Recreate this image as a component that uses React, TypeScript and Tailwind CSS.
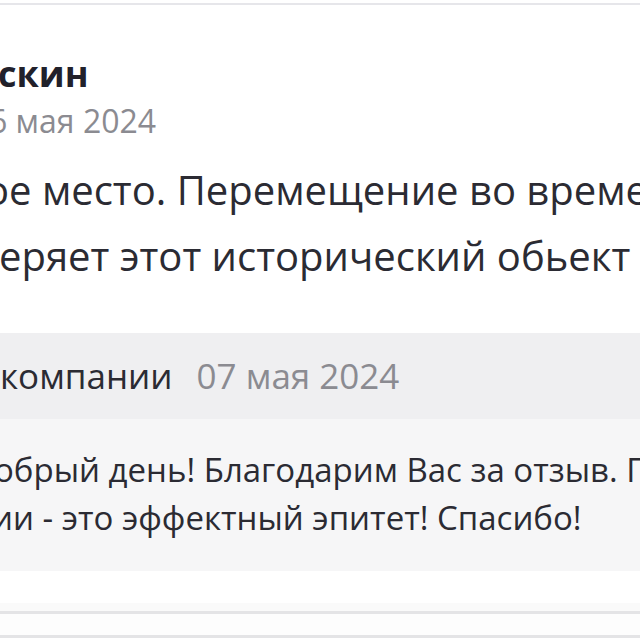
import React from 'react';

const font = { fontFamily: '"Open Sans", "Noto Sans", sans-serif' };

function Review() {
  return (
    <div className="overflow-hidden text-[#2b2b33]">
      <div className="mt-[3px] h-[2px] bg-[#e6e6ea]" />
      <div className="pt-[47px]">
        <div className="-ml-[2px] whitespace-nowrap text-[36px] leading-[44px] font-bold text-[#21212b]">
          скин
        </div>
        <div className="mt-[5px] -ml-[11px] whitespace-nowrap text-[32px] leading-[40px] text-[#8b8b91]">
          6 мая 2024
        </div>
        <div className="mt-[16px] text-[40px] leading-[66px]">
          <div className="-ml-[15px] whitespace-nowrap">ое место. Перемещение во времени</div>
          <div className="-ml-[1px] whitespace-nowrap">еряет этот исторический обьект</div>
        </div>
      </div>
      <div className="mt-[44px]">
        <div className="flex h-[86px] items-center gap-[24px] bg-[#efeff1] whitespace-nowrap text-[35px]">
          <span>компании</span>
          <span className="text-[#8b8b91]">07 мая 2024</span>
        </div>
        <div className="bg-[#f6f6f7] pt-[27px] pb-[29px] text-[33px] leading-[48px]">
          <div className="-ml-[6px] whitespace-nowrap">обрый день! Благодарим Вас за отзыв. Пусть</div>
          <div className="-ml-[8px] whitespace-nowrap">ии - это эффектный эпитет! Спасибо!</div>
        </div>
      </div>
      <div className="mt-[32px] h-[8px] bg-[#fafafa]" />
      <div className="h-[3px] bg-[#e4e4e6]" />
      <div className="h-[21px] bg-[#fdfdfd]" />
      <div className="h-[3px] bg-[#e4e4e6]" />
    </div>
  );
}

export default function App() {
  return (
    <div className="w-[640px] h-[640px] overflow-hidden bg-white" style={font}>
      <Review />
    </div>
  );
}
